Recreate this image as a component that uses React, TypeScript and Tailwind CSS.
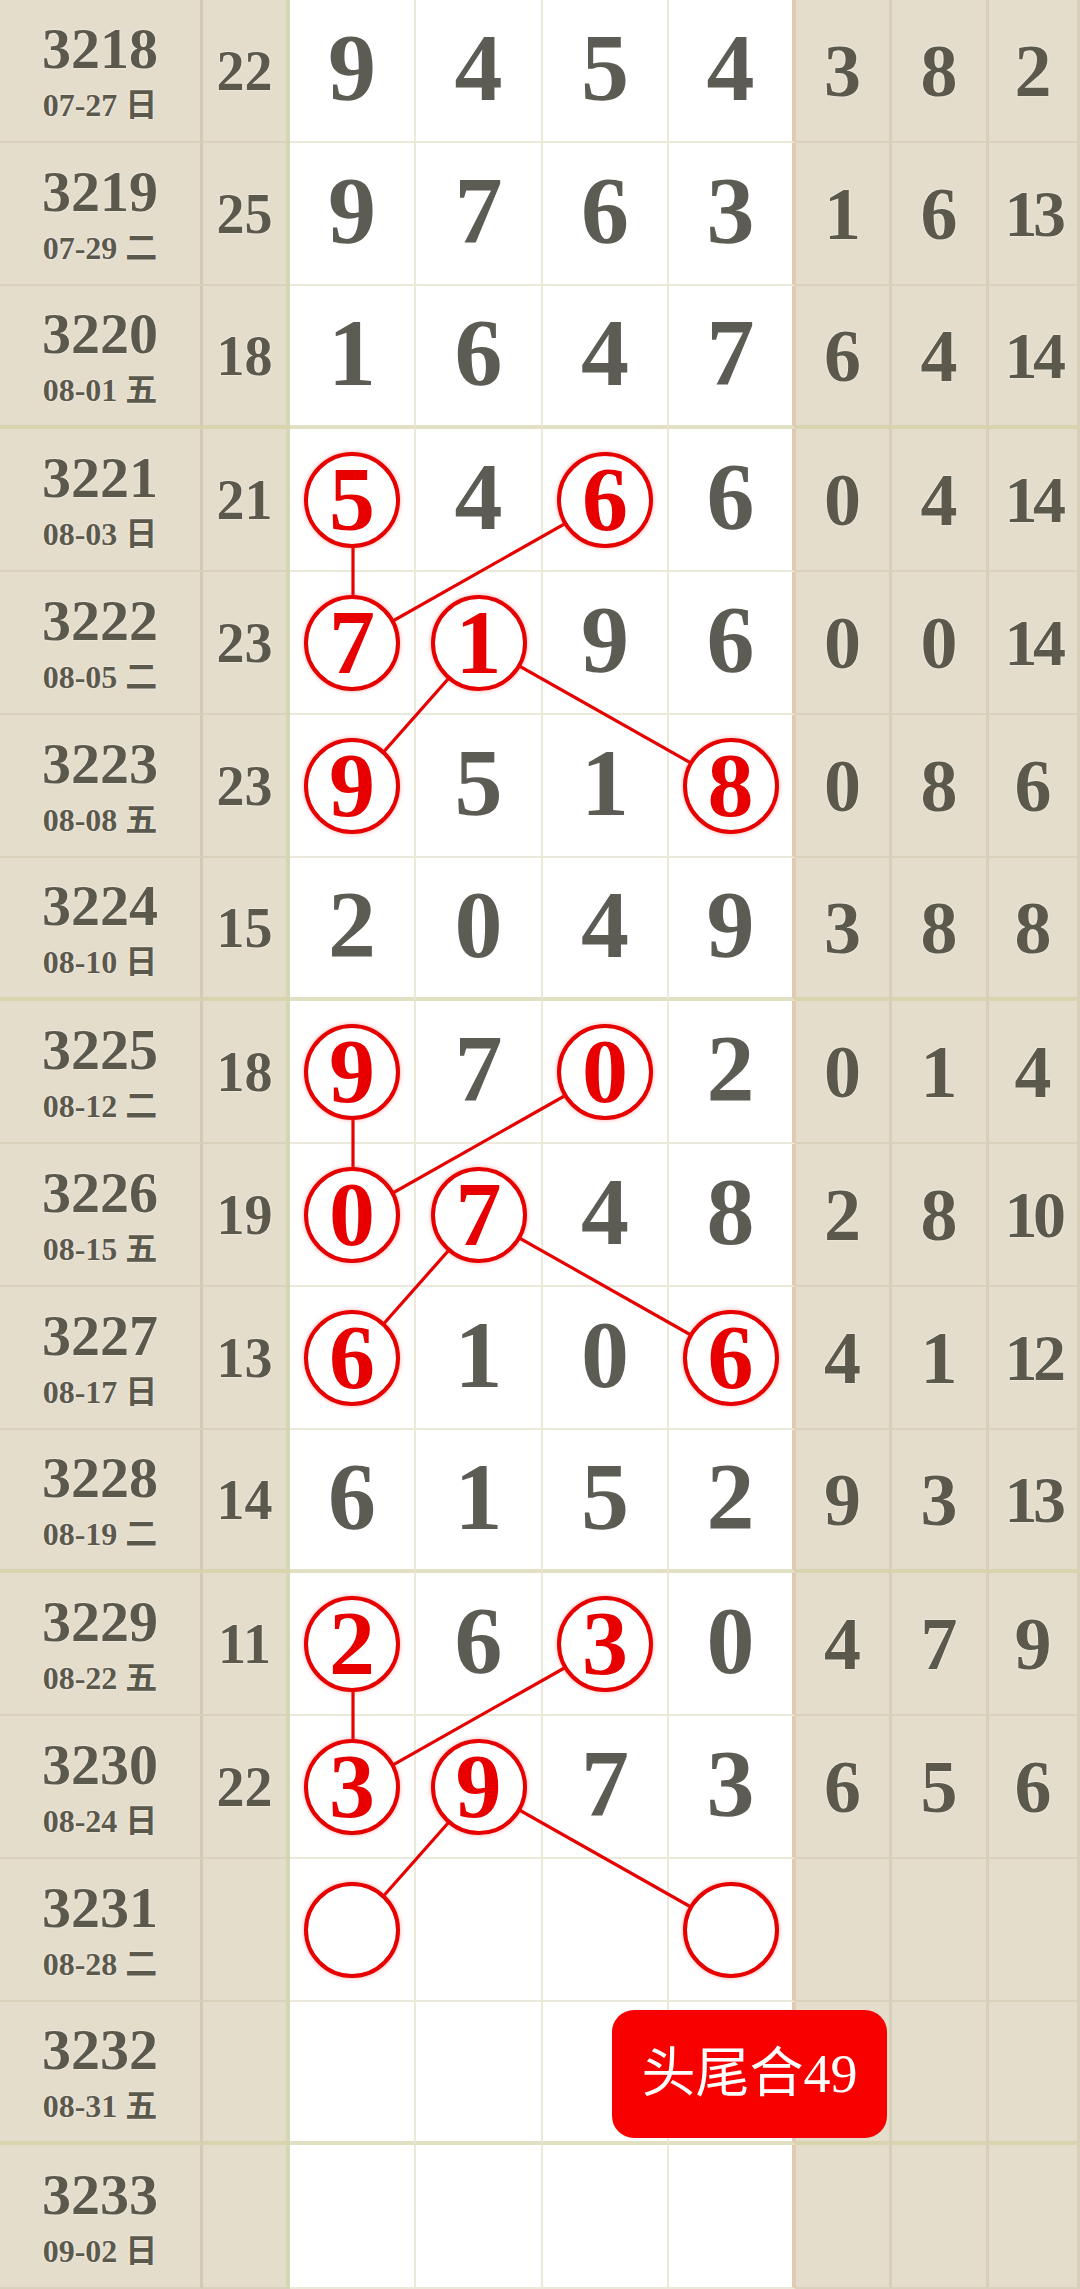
import React from "react";

type Row = {
  period: string;
  date: string;
  week: string;
  sum?: string;
  nums?: number[];
  rest?: number[];
  circles?: number[];
};

const ROWS: Row[] = [
  { period: "3218", date: "07-27", week: "日", sum: "22", nums: [9, 4, 5, 4], rest: [3, 8, 2] },
  { period: "3219", date: "07-29", week: "二", sum: "25", nums: [9, 7, 6, 3], rest: [1, 6, 13] },
  { period: "3220", date: "08-01", week: "五", sum: "18", nums: [1, 6, 4, 7], rest: [6, 4, 14] },
  { period: "3221", date: "08-03", week: "日", sum: "21", nums: [5, 4, 6, 6], rest: [0, 4, 14], circles: [0, 2] },
  { period: "3222", date: "08-05", week: "二", sum: "23", nums: [7, 1, 9, 6], rest: [0, 0, 14], circles: [0, 1] },
  { period: "3223", date: "08-08", week: "五", sum: "23", nums: [9, 5, 1, 8], rest: [0, 8, 6], circles: [0, 3] },
  { period: "3224", date: "08-10", week: "日", sum: "15", nums: [2, 0, 4, 9], rest: [3, 8, 8] },
  { period: "3225", date: "08-12", week: "二", sum: "18", nums: [9, 7, 0, 2], rest: [0, 1, 4], circles: [0, 2] },
  { period: "3226", date: "08-15", week: "五", sum: "19", nums: [0, 7, 4, 8], rest: [2, 8, 10], circles: [0, 1] },
  { period: "3227", date: "08-17", week: "日", sum: "13", nums: [6, 1, 0, 6], rest: [4, 1, 12], circles: [0, 3] },
  { period: "3228", date: "08-19", week: "二", sum: "14", nums: [6, 1, 5, 2], rest: [9, 3, 13] },
  { period: "3229", date: "08-22", week: "五", sum: "11", nums: [2, 6, 3, 0], rest: [4, 7, 9], circles: [0, 2] },
  { period: "3230", date: "08-24", week: "日", sum: "22", nums: [3, 9, 7, 3], rest: [6, 5, 6], circles: [0, 1] },
  { period: "3231", date: "08-28", week: "二", circles: [0, 3] },
  { period: "3232", date: "08-31", week: "五" },
  { period: "3233", date: "09-02", week: "日" },
];

const ROW_H = 143;
const DIGIT_X = [353, 479.5, 606, 732.5];
const GROUP_STARTS = [3, 7, 11];

const serif = "font-['Liberation_Serif','Noto_Sans_CJK_SC',serif]";

function borderBottom(group: boolean, white: boolean) {
  if (group) {
    return white ? "border-b-4 border-b-[#e2e0c3]" : "border-b-4 border-b-[#d8d4ae]";
  }
  return white ? "border-b-2 border-b-[#ebe9d9]" : "border-b-2 border-b-[#d9d1bb]";
}

function Circle({ value }: { value?: number }) {
  return (
    <div className="relative z-20 flex h-[96px] w-[96px] items-center justify-center rounded-full border-4 border-[#e60000] bg-white shadow-[0_0_4px_rgba(255,60,60,0.45)]">
      {value !== undefined && (
        <span className="pb-[2px] text-[92px] leading-none font-bold text-[#e80000]">
          {value}
        </span>
      )}
    </div>
  );
}

function TableRow({ row, index }: { row: Row; index: number }) {
  const group = index % 4 === 2;
  const height = index === ROWS.length - 1 ? "h-[144px]" : "h-[143px]";
  const beigeB = borderBottom(group, false);
  const whiteB = borderBottom(group, true);

  return (
    <div className={`grid grid-cols-[203px_87px_126px_127px_126px_127px_96px_97px_91px] ${height}`}>
      <div className={`flex flex-col items-center justify-center gap-[11px] border-r-[3px] border-r-[#d4cab3] bg-[#e5ddcb] text-[#5b584c] [text-shadow:0_0_2px_#fff] ${beigeB}`}>
        <span className="text-[58px] leading-[58px] font-bold">{row.period}</span>
        <span className="text-[32px] leading-[32px] font-bold">
          {row.date} {row.week}
        </span>
      </div>
      <div className={`flex items-center justify-center border-r-4 border-r-[#d3d7b3] bg-[#e5ddcb] text-[56px] font-bold text-[#5b584c] [text-shadow:0_0_2px_#fff] ${beigeB}`}>
        {row.sum}
      </div>
      {[0, 1, 2, 3].map((c) => {
        const circled = row.circles?.includes(c);
        const value = row.nums?.[c];
        const right = c === 3 ? "border-r-4 border-r-[#dfcbb1]" : "border-r-2 border-r-[#ece9d9]";
        return (
          <div
            key={c}
            className={`relative flex items-center justify-center bg-white ${right} ${whiteB}`}
          >
            {circled ? (
              <Circle value={value} />
            ) : (
              <span className="pb-[6px] text-[96px] leading-none font-bold text-[#5d5c54]">
                {value}
              </span>
            )}
          </div>
        );
      })}
      {[0, 1, 2].map((c) => {
        const value = row.rest?.[c];
        const twoDigit = value !== undefined && value >= 10;
        return (
          <div
            key={c}
            className={`flex items-center justify-center border-r-[3px] border-r-[#d8cfb9] bg-[#e5ddcb] font-bold text-[#5b584c] [text-shadow:0_0_2px_#fff] ${beigeB}`}
          >
            {value !== undefined && (
              <span
                className={
                  twoDigit
                    ? "text-[66px] leading-none tracking-[-0.07em]"
                    : "text-[74px] leading-none"
                }
              >
                {value}
              </span>
            )}
          </div>
        );
      })}
    </div>
  );
}

function Links() {
  const cy = (r: number) => r * ROW_H + ROW_H / 2;
  const lines: [number, number, number, number][] = [];
  GROUP_STARTS.forEach((g) => {
    lines.push([DIGIT_X[0], cy(g), DIGIT_X[0], cy(g + 1)]);
    lines.push([DIGIT_X[2], cy(g), DIGIT_X[0], cy(g + 1)]);
    lines.push([DIGIT_X[1], cy(g + 1), DIGIT_X[0], cy(g + 2)]);
    lines.push([DIGIT_X[1], cy(g + 1), DIGIT_X[3], cy(g + 2)]);
  });
  return (
    <svg
      className="pointer-events-none absolute left-0 top-0 z-10"
      width={1080}
      height={2289}
      viewBox="0 0 1080 2289"
    >
      {lines.map(([x1, y1, x2, y2], i) => (
        <line key={i} x1={x1} y1={y1} x2={x2} y2={y2} stroke="#e60000" strokeWidth={3.2} />
      ))}
    </svg>
  );
}

export default function App() {
  return (
    <div className={`relative w-[1080px] bg-[#e5ddcb] ${serif}`}>
      {ROWS.map((row, i) => (
        <TableRow key={row.period} row={row} index={i} />
      ))}
      <Links />
      <div className="absolute left-[612px] top-[2010px] z-30 flex h-[128px] w-[275px] items-center justify-center rounded-[22px] bg-[#f80000] text-[54px] leading-none font-normal text-white">
        头尾合49
      </div>
    </div>
  );
}
